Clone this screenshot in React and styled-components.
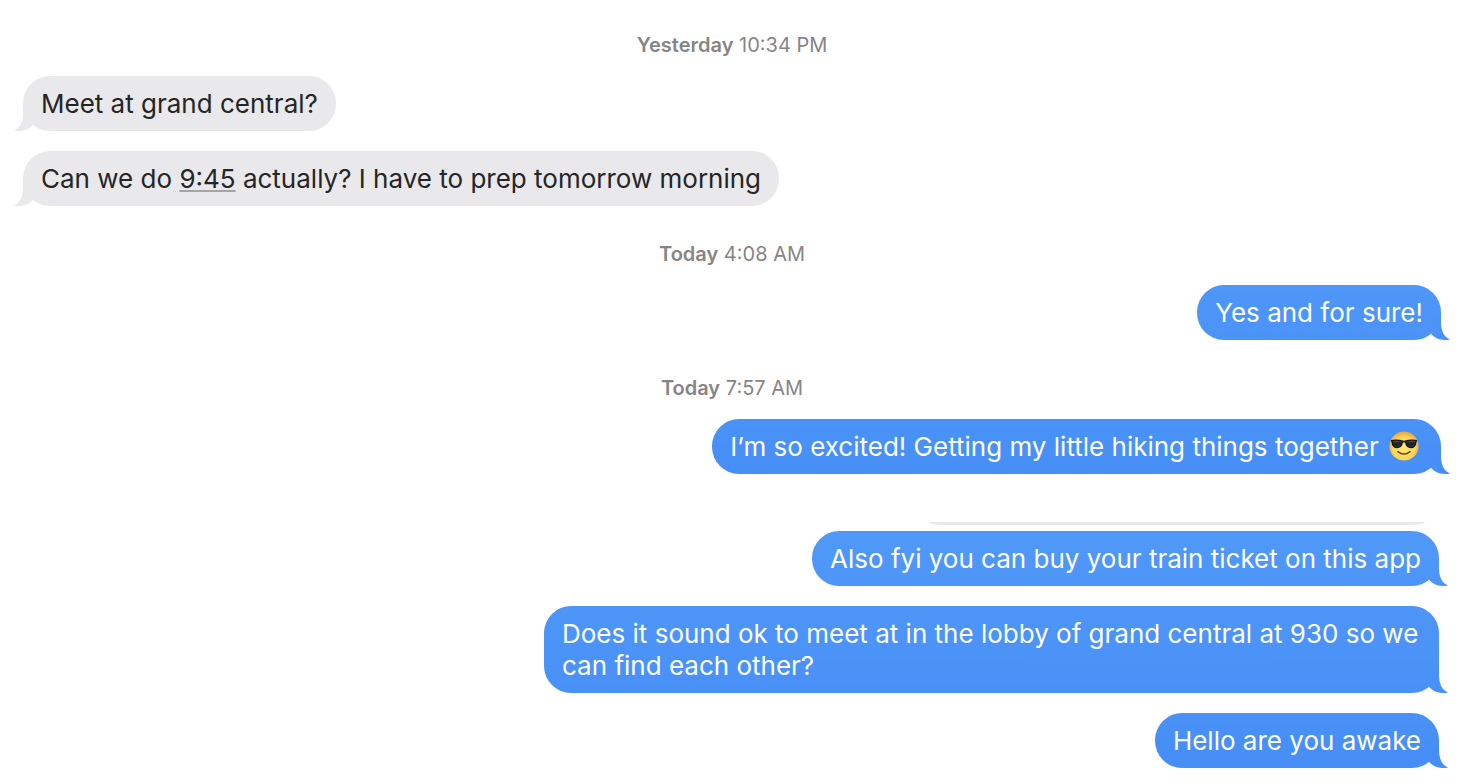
import styled, { createGlobalStyle } from "styled-components";

const GlobalStyle = createGlobalStyle`
    * {
        box-sizing: border-box;
    }

    body {
        margin: 0;
        background: #ffffff;
        font-family: Inter, "Liberation Sans", sans-serif;
    }
`

function App() {
    return (
        <>
            <GlobalStyle />
            <Chat>
                <Thread $side="21px">
                    <Stamp day="Yesterday" time="10:34 PM" />
                    <Message>Meet at grand central?</Message>
                    <Message>
                        Can we do <TimeLink href="#calendar">9:45</TimeLink> actually? I have to prep tomorrow morning
                    </Message>
                    <Stamp day="Today" time="4:08 AM" />
                    <Message sent from="#4e96f8" to="#4b93f7">Yes and for sure!</Message>
                    <Stamp day="Today" time="7:57 AM" />
                    <Message sent from="#4992f7" to="#478ff6">
                        I’m so excited! Getting my little hiking things together <CoolFace />
                    </Message>
                </Thread>
                <Thread $side="23px">
                    <CardEdge />
                    <Message sent from="#5099f8" to="#4d95f7">Also fyi you can buy your train ticket on this app</Message>
                    <Message sent from="#4d95f7" to="#4991f6">
                        Does it sound ok to meet at in the lobby of grand central at 930 so we can find each other?
                    </Message>
                    <Message sent from="#4991f6" to="#468ef5">Hello are you awake</Message>
                </Thread>
            </Chat>
        </>
    )
}

const Chat = styled.main`
    display: flex;
    flex-direction: column;
    gap: 48px;
    padding: 33px 0 16px;
`

const Thread = styled.section`
    display: flex;
    flex-direction: column;
    padding: 0 ${(props) => props.$side} 0 23px;
`

function Stamp({ day, time }) {
    return (
        <StampStyled>
            <strong>{day}</strong> {time}
        </StampStyled>
    )
}

const StampStyled = styled.p`
    margin: 0 0 19px;
    text-align: center;
    font-size: 20px;
    line-height: 24px;
    color: #858585;

    div + & {
        margin-top: 36px;
    }

    strong {
        font-weight: 600;
    }
`

function Message({ sent, from = "#e9e9eb", to = "#e9e9eb", children }) {
    return (
        <Bubble $sent={sent} $from={from} $to={to}>
            {children}
            <Tail $sent={sent} $fill={to} viewBox="0 0 20 28" aria-hidden="true">
                <path d="M10 0V10C10 19 13 25 19 27.4C12 29 5 27.5 0 22Z" />
            </Tail>
        </Bubble>
    )
}

const Bubble = styled.div`
    position: relative;
    align-self: ${(props) => (props.$sent ? "flex-end" : "flex-start")};
    max-width: min(895px, 90%);
    padding: 12px 18px 11px;
    border-radius: 27px;
    background: linear-gradient(${(props) => props.$from}, ${(props) => props.$to});
    color: ${(props) => (props.$sent ? "#ffffff" : "#252525")};
    font-size: 26px;
    line-height: 32px;

    div + & {
        margin-top: 20px;
    }
`

const Tail = styled.svg`
    position: absolute;
    bottom: 0;
    ${(props) => (props.$sent ? "right: -10px;" : "left: -10px; transform: scaleX(-1);")}
    width: 20px;
    height: 28px;
    fill: ${(props) => props.$fill};
`

const TimeLink = styled.a`
    color: inherit;
    text-decoration: underline;
    text-decoration-color: #a5a5a7;
    text-decoration-thickness: 2px;
    text-underline-offset: 2px;
    text-decoration-skip-ink: none;
`

// bottom edge of a shared link card that is cut off above the messages
const CardEdge = styled.hr`
    align-self: flex-end;
    width: 35%;
    height: 3px;
    margin: 0 14px 6px 0;
    border: 0;
    border-radius: 0 0 14px 14px / 0 0 3px 3px;
    background: #e9e9eb;
`

function CoolFace() {
    return (
        <Emoji viewBox="0 0 32 32" role="img" aria-label="Smiling face with sunglasses">
            <defs>
                <radialGradient id="skin" cx="50%" cy="58%" r="58%">
                    <stop offset="0" stopColor="#ffe97c" />
                    <stop offset="0.65" stopColor="#fdd65a" />
                    <stop offset="1" stopColor="#e9a436" />
                </radialGradient>
                <linearGradient id="lens" x1="0" y1="0" x2="0" y2="1">
                    <stop offset="0" stopColor="#555555" />
                    <stop offset="0.4" stopColor="#1d1d1d" />
                    <stop offset="1" stopColor="#2f2f2f" />
                </linearGradient>
            </defs>
            <circle cx="16" cy="16" r="15.5" fill="url(#skin)" />
            <path d="M9.5 22Q16 27 22.5 22" fill="none" stroke="#7a4313" strokeWidth="1.6" strokeLinecap="round" />
            <path d="M2 9.6Q9 8.4 16 10.4Q23 8.4 30 9.6L29.4 12Q28.6 18.4 23.4 18.4Q18 18.4 17.2 12.6Q16 11.6 14.8 12.6Q14 18.4 8.6 18.4Q3.4 18.4 2.6 12Z" fill="#161616" />
            <path d="M4 10.8Q9 9.8 13.6 11.4Q13.2 17 8.8 17Q4.4 17 4 10.8ZM28 10.8Q23 9.8 18.4 11.4Q18.8 17 23.2 17Q27.6 17 28 10.8Z" fill="url(#lens)" />
        </Emoji>
    )
}

const Emoji = styled.svg`
    width: 30px;
    height: 30px;
    margin: 0 4px 0 3px;
    vertical-align: -5px;
`

export default App;
